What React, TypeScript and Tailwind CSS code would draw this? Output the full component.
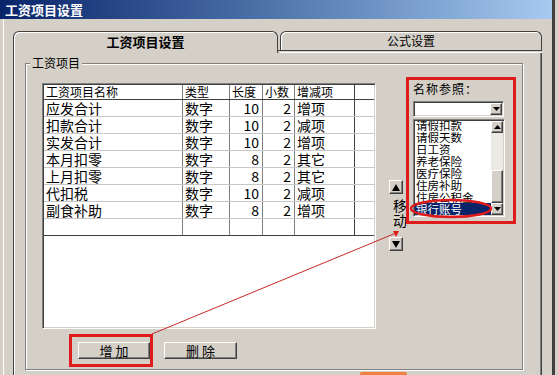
const rows = [
  ['应发合计', '数字', '10', '2', '增项'],
  ['扣款合计', '数字', '10', '2', '减项'],
  ['实发合计', '数字', '10', '2', '增项'],
  ['本月扣零', '数字', '8', '2', '其它'],
  ['上月扣零', '数字', '8', '2', '其它'],
  ['代扣税', '数字', '10', '2', '减项'],
  ['副食补助', '数字', '8', '2', '增项'],
  ['', '', '', '', ''],
]

const refs = ['请假扣款', '请假天数', '日工资', '养老保险', '医疗保险', '住房补助', '住房公积金']

const raised =
  'bg-[#d4d0c8] border border-t-white border-l-white border-r-[#404040] border-b-[#404040] shadow-[inset_-1px_-1px_0_#808080]'
const sunken =
  'border border-t-[#808080] border-l-[#808080] border-r-white border-b-white shadow-[inset_1px_1px_0_#404040,inset_-1px_-1px_0_#d4d0c8] p-[1px]'

function Arrow({ down, w = 7, h = 4 }: { down?: boolean; w?: number; h?: number }) {
  return (
    <svg width={w} height={h} viewBox={`0 0 ${w} ${h}`}>
      <path d={down ? `M0 0H${w}L${w / 2} ${h}Z` : `M0 ${h}H${w}L${w / 2} 0Z`} fill="#000" />
    </svg>
  )
}

export default function App() {
  return (
    <div className="relative w-[558px] h-[375px] overflow-hidden bg-[#d4d0c8] flex text-black font-['Noto_Sans_CJK_SC',sans-serif]">
      <div className="w-[552px] flex flex-col">
        <div className="h-[19px] bg-linear-to-r from-[#0a246a] to-[#a6caf0] text-white font-bold text-[13px] leading-[19px] pl-[5px]">
          工资项目设置
        </div>

        <div className="flex-1 ml-[3px] border-l border-white pl-[9px] pt-[12px]">
          {/* tabs */}
          <div className="flex w-[529px] h-[22px]">
            <div className="w-[265px] h-[22px] border-t border-l border-r border-[#404040] rounded-t-[6px] shadow-[inset_1px_1px_0_#fff] text-center font-bold text-[13px] leading-[19px]">
              工资项目设置
            </div>
            <div className="w-[2px] h-[20px] border-b border-[#404040]" />
            <div className="w-[262px] flex flex-col">
              <div className="h-[19px] border-t border-l border-r border-[#404040] rounded-t-[6px] shadow-[inset_1px_1px_0_#fff] text-center text-[12px] leading-[18px]">
                公式设置
              </div>
              <div className="h-px bg-[#404040]" />
              <div className="h-px" />
              <div className="h-px bg-white" />
            </div>
          </div>

          {/* panel */}
          <div className="w-[529px] h-[330px] border-l border-r border-[#404040] shadow-[inset_1px_0_0_#fff,inset_-1px_0_0_#808080] pt-[10px] pl-[11px]">
            <div className="relative w-[498px] h-[307px] border border-[#808080] shadow-[1px_1px_0_#fff,inset_1px_1px_0_#fff] flex items-start">
              <div className="absolute left-[4px] -top-[8px] px-[2px] bg-[#d4d0c8] text-[12px] leading-[14px]">工资项目</div>

              {/* left column */}
              <div className="ml-[16px] mt-[19px] w-[334px] flex flex-col">
                <div className={`w-[334px] h-[246px] bg-white ${sunken}`}>
                  <div className="flex h-[15px] border-b border-[#404040] text-[12px] leading-[14px]">
                    <div className="w-[139px] border-r border-[#808080] pl-[2px]">工资项目名称</div>
                    <div className="w-[47px] border-r border-[#808080] pl-[2px]">类型</div>
                    <div className="w-[33px] border-r border-[#808080] pl-[2px]">长度</div>
                    <div className="w-[32px] border-r border-[#808080] pl-[2px]">小数</div>
                    <div className="w-[60px] border-r border-[#404040] pl-[2px]">增减项</div>
                  </div>
                  {rows.map((r, i) => (
                    <div
                      key={i}
                      className={`flex h-[17px] border-b text-[14px] leading-[16px] ${i === rows.length - 1 ? 'border-[#404040]' : 'border-[#c8c8c8]'}`}
                    >
                      <div className="w-[139px] border-r border-[#808080] pl-[2px]">{r[0]}</div>
                      <div className="w-[47px] border-r border-[#808080] pl-[2px]">{r[1]}</div>
                      <div className="w-[33px] border-r border-[#808080] pr-[3px] text-right">{r[2]}</div>
                      <div className="w-[32px] border-r border-[#808080] pr-[3px] text-right">{r[3]}</div>
                      <div className="w-[60px] border-r border-[#404040] pl-[2px]">{r[4]}</div>
                    </div>
                  ))}
                </div>

                <div className="mt-[5px] flex items-center">
                  <div className="ml-[27px] w-[84px] h-[33px] border-[3px] border-[#e01b1b] pl-[6px] flex items-center">
                    <button className={`w-[72px] h-[17px] text-[13px] leading-[14px] ${raised}`}>增 加</button>
                  </div>
                  <button className={`ml-[11px] w-[73px] h-[17px] text-[13px] leading-[14px] ${raised}`}>删 除</button>
                </div>
              </div>

              {/* move */}
              <div className="ml-[13px] mt-[116px] w-[14px] flex flex-col">
                <div className={`w-[14px] h-[14px] flex items-center justify-center ${raised}`}>
                  <Arrow w={8} h={7} />
                </div>
                <div className="mt-[4px] ml-[4px] text-[14px] leading-[15px]">移</div>
                <div className="ml-[4px] text-[14px] leading-[15px]">动</div>
                <div className={`mt-[9px] w-[14px] h-[14px] flex items-center justify-center ${raised}`}>
                  <Arrow down w={8} h={7} />
                </div>
              </div>

              {/* name reference */}
              <div className="ml-[3px] mt-[13px] w-[110px] h-[147px] border-[3px] border-[#e01b1b] pl-[4px] pt-[2px] flex flex-col">
                <div className="text-[12px] leading-[14px] tracking-[1px]">名称参照：</div>
                <div className={`mt-[5px] w-[91px] h-[16px] bg-white flex justify-end ${sunken}`}>
                  <div className={`w-[12px] h-[12px] flex items-center justify-center ${raised}`}>
                    <Arrow down />
                  </div>
                </div>
                <div className={`mt-[2px] w-[92px] h-[98px] bg-white flex ${sunken}`}>
                  <div className="w-[76px] overflow-hidden flex flex-col text-[11.5px] leading-[12px]">
                    <div className="-mt-[2px]">
                      {refs.map((t) => (
                        <div key={t} className="pl-[1px] whitespace-nowrap">{t}</div>
                      ))}
                      <div className="pl-[1px] bg-[#0a246a] text-white whitespace-nowrap">银行账号</div>
                    </div>
                  </div>
                  <div className="w-[12px] flex flex-col">
                    <div className={`w-[12px] h-[12px] flex items-center justify-center ${raised}`}>
                      <Arrow />
                    </div>
                    <div className="h-[37px] bg-[#ebe9e4]" />
                    <div className={`h-[33px] ${raised}`} />
                    <div className={`w-[12px] h-[12px] flex items-center justify-center ${raised}`}>
                      <Arrow down />
                    </div>
                  </div>
                </div>
              </div>
            </div>
            <div className="mt-[2px] ml-[335px] w-[47px] h-[4px] bg-[#f08040] rounded-t-[2px]" />
          </div>
        </div>
      </div>
      <div className="w-[3px] bg-[#404040]" />
      <div className="flex-1" />

      <svg className="absolute left-0 top-0 pointer-events-none" width="558" height="375" viewBox="0 0 558 375">
        <line x1="152" y1="334" x2="396" y2="233" stroke="#c62828" strokeWidth="1" />
        <path d="M399 231 L393 231 L396 237 Z" fill="#e01b1b" />
        <ellipse cx="451" cy="208.5" rx="40" ry="8.5" fill="none" stroke="#e01b1b" strokeWidth="2.5" />
      </svg>
    </div>
  )
}
